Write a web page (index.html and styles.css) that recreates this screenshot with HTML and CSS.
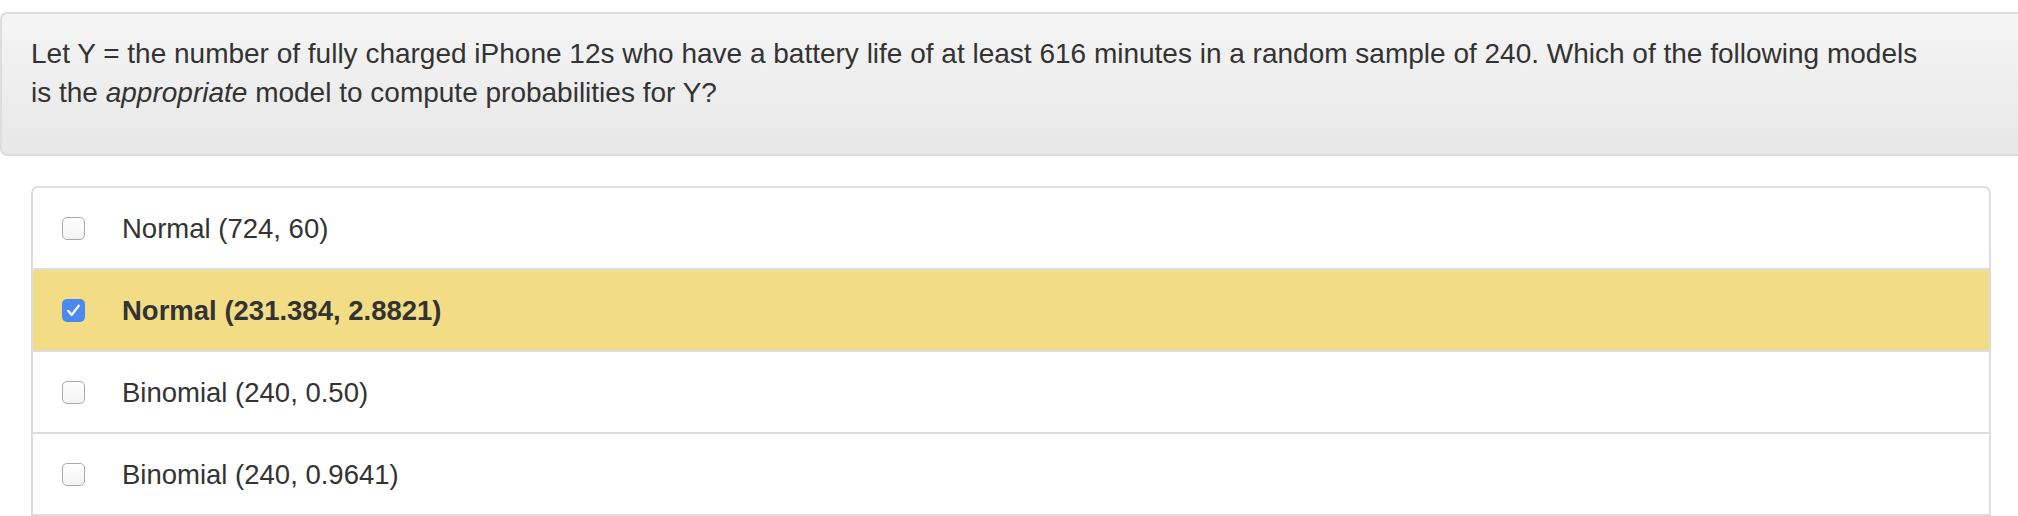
FILE: index.html
```html
<!DOCTYPE html>
<html lang="en">
<head>
<meta charset="utf-8">
<title>Question</title>
<link rel="stylesheet" href="styles.css">
</head>
<body>
<div class="question">
  <p class="prompt">Let Y = the number of fully charged iPhone 12s who have a battery life of at least 616 minutes in a random sample of 240. Which of the following models is the <em>appropriate</em> model to compute probabilities for Y?</p>
</div>
<ul class="options">
  <li class="option"><span class="box"></span><span class="label">Normal (724, 60)</span></li>
  <li class="option selected"><span class="box checked"><svg viewBox="0 0 24 24" width="21" height="21"><path d="M6 12.5l4 4.5L18 6.5" fill="none" stroke="#fff" stroke-width="2.6" stroke-linecap="round" stroke-linejoin="round"/></svg></span><span class="label">Normal (231.384, 2.8821)</span></li>
  <li class="option"><span class="box"></span><span class="label">Binomial (240, 0.50)</span></li>
  <li class="option"><span class="box"></span><span class="label">Binomial (240, 0.9641)</span></li>
</ul>
</body>
</html>
```

FILE: styles.css
```css
html, body {
  margin: 0;
  padding: 0;
  background: #ffffff;
}
body {
  font-family: "Liberation Sans", Arial, Helvetica, sans-serif;
  color: #333333;
  padding-top: 12px;
  overflow: hidden;
}
.question {
  border-top: 2px solid #dddddd;
  border-bottom: 2px solid #dddddd;
  border-left: 2px solid #dddddd;
  border-radius: 7px 0 0 7px;
  background: linear-gradient(to bottom, #f5f5f5 0%, #e7e7e7 100%);
  padding: 21px 85px 42px 29px;
}
.prompt {
  margin: 0;
  font-size: 28px;
  line-height: 38.5px;
}
.prompt em {
  font-style: italic;
}
.options {
  list-style: none;
  margin: 30px 27px 0 31px;
  padding: 0;
  border: 2px solid #dddddd;
  border-radius: 7px 7px 0 0;
  overflow: hidden;
}
.option {
  display: flex;
  align-items: center;
  height: 80px;
  padding-left: 29px;
  font-size: 27.5px;
  background: #ffffff;
}
.option + .option {
  border-top: 2px solid #dddddd;
}
.option.selected {
  background: #f2dd86;
  font-weight: bold;
}
.box {
  box-sizing: border-box;
  width: 23px;
  height: 23px;
  border: 1px solid #a9a9a9;
  border-radius: 5px;
  background: linear-gradient(to bottom, #ffffff, #f3f3f3);
  margin-right: 37px;
  display: flex;
  align-items: center;
  justify-content: center;
  flex-shrink: 0;
}
.box.checked {
  border: none;
  background: #4a89f0;
}
.label {
  line-height: 37px;
}
```
